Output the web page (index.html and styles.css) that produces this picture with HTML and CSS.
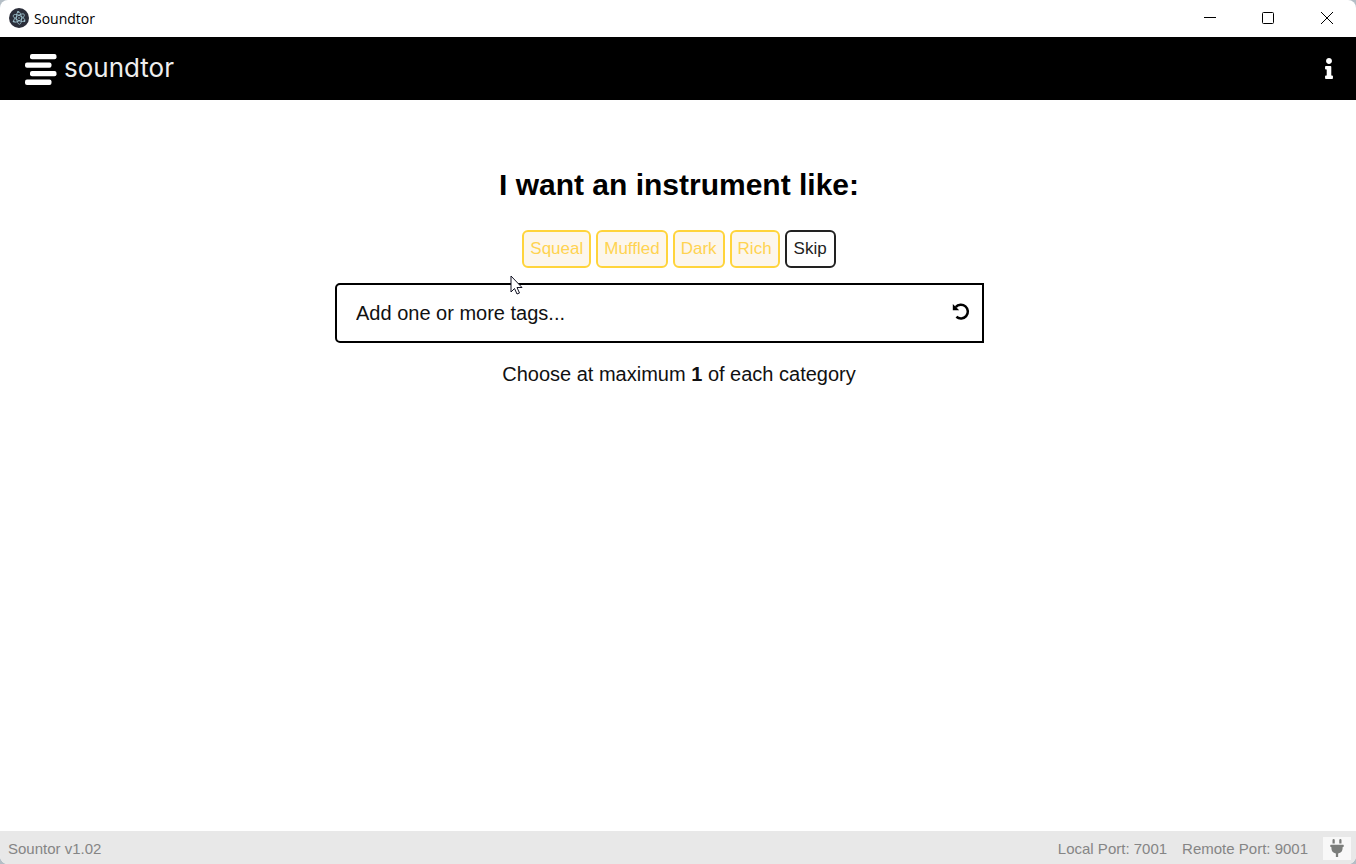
FILE: index.html
```html
<!DOCTYPE html>
<html lang="en">
<head>
<meta charset="utf-8">
<title>Soundtor</title>
<link rel="stylesheet" href="styles.css">
</head>
<body>
<div class="window">
  <div class="titlebar">
    <svg class="app-icon" viewBox="0 0 20 20" aria-hidden="true">
      <circle cx="10" cy="10" r="10" fill="#2b2e3a"/>
      <g fill="none" stroke="#9fc3cf" stroke-width="0.8">
        <ellipse cx="10" cy="10" rx="6.3" ry="2.5" transform="rotate(25 10 10)"/>
        <ellipse cx="10" cy="10" rx="6.3" ry="2.5" transform="rotate(85 10 10)"/>
        <ellipse cx="10" cy="10" rx="6.3" ry="2.5" transform="rotate(145 10 10)"/>
      </g>
      <g fill="#9fc3cf"><circle cx="10" cy="10" r="0.8"/><circle cx="4.6" cy="13.4" r="0.9"/><circle cx="15.4" cy="13" r="0.9"/><circle cx="9" cy="4" r="0.9"/></g>
    </svg>
    <span class="window-title">Soundtor</span>
    <div class="window-controls">
      <button class="window-button" aria-label="Minimize"><svg viewBox="0 0 14 14"><path d="M0 6.500h12"/></svg></button>
      <button class="window-button" aria-label="Maximize"><svg viewBox="0 0 14 14"><rect x="0.500" y="1.500" width="11" height="11" rx="1"/></svg></button>
      <button class="window-button" aria-label="Close"><svg viewBox="0 0 14 14"><path d="M1 1l12 12M13 1L1 13"/></svg></button>
    </div>
  </div>
  <header class="header">
    <div class="brand">
      <svg class="brand-mark" viewBox="0 0 32 34" aria-hidden="true">
        <g fill="#fff"><rect x="5" y="3" width="26.500" height="5.300" rx="2"/><rect x="0" y="11.500" width="26.500" height="5.300" rx="2"/><rect x="5" y="20" width="26.500" height="5.300" rx="2"/><rect x="0" y="28.600" width="26.500" height="5.300" rx="2"/></g>
      </svg>
      <span class="brand-name">soundtor</span>
    </div>
    <button class="info-button" aria-label="Information">
      <svg viewBox="0 0 192 512" width="8" height="21"><path fill="#fff" d="M20 424.229h20V279.771H20c-11.046 0-20-8.954-20-20V212c0-11.046 8.954-20 20-20h112c11.046 0 20 8.954 20 20v212.229h20c11.046 0 20 8.954 20 20V492c0 11.046-8.954 20-20 20H20c-11.046 0-20-8.954-20-20v-47.771c0-11.046 8.954-20 20-20zM96 0C56.235 0 24 32.235 24 72s32.235 72 72 72 72-32.235 72-72S135.764 0 96 0z"/></svg>
    </button>
  </header>
  <main class="main">
    <h1 class="heading">I want an instrument like:</h1>
    <div class="chips">
      <button class="chip">Squeal</button>
      <button class="chip">Muffled</button>
      <button class="chip">Dark</button>
      <button class="chip">Rich</button>
      <button class="chip chip-skip">Skip</button>
    </div>
    <div class="search">
      <div class="search-box">
        <input class="search-input" type="text" aria-label="Tags" placeholder="Add one or more tags...">
        <button class="reset-button" aria-label="Reset">
          <svg viewBox="0 0 18 20" width="18" height="20"><path d="M3.700 4.100A6.900 6.900 0 1 1 4.400 13.800" fill="none" stroke="#000" stroke-width="2.500"/><path d="M0.800 1V7.300H7.200Z"/></svg>
        </button>
      </div>
    </div>
    <p class="hint">Choose at maximum <strong>1</strong> of each category</p>
    <svg class="cursor" viewBox="0 0 13 20" aria-hidden="true"><path d="M1 1V17L4.500 13.500L7 19L9.500 18L7 12.500H12Z" fill="#fff" stroke="#112" stroke-width="1"/></svg>
  </main>
  <footer class="statusbar">
    <span>Sountor v1.02</span>
    <div class="ports">
      <span>Local Port: 7001</span>
      <span>Remote Port: 9001</span>
      <button class="plug-button" aria-label="Connection">
        <svg viewBox="0 0 384 512" width="14" height="18"><path fill="#7b7d7b" d="M320 32a32 32 0 0 0-64 0v96h64zm48 128H16A16 16 0 0 0 0 176v32a16 16 0 0 0 16 16h16v32a160.070 160.070 0 0 0 128 156.800V512h64v-99.200A160.070 160.070 0 0 0 352 256v-32h16a16 16 0 0 0 16-16v-32a16 16 0 0 0-16-16zM128 32a32 32 0 0 0-64 0v96h64z"/></svg>
      </button>
    </div>
  </footer>
</div>
</body>
</html>
```
FILE: styles.css
```css
* { box-sizing: border-box; }
html { background: #b4bec6; }
body { margin: 0; font-family: "Liberation Sans", Arial, sans-serif; color: #000; }
button { font: inherit; border: 0; padding: 0; background: none; }
svg { display: block; }

.window {
  display: flex;
  flex-direction: column;
  min-height: 100vh;
  background: #fff;
  border-radius: 8px;
  overflow: hidden;
}

.titlebar { display: flex; align-items: center; height: 37px; padding: 0 0 1px 9px; gap: 5px; }
.app-icon { width: 20px; height: 20px; }
.window-title { font-family: "Open Sans", "Noto Sans", sans-serif; font-size: 14px; }
.window-controls { display: flex; margin-left: auto; }
.window-button { display: grid; place-items: center; width: 58px; height: 36px; }
.window-button svg { width: 14px; height: 14px; fill: none; stroke: #000; stroke-width: 1; }

.header {
  display: flex;
  align-items: center;
  justify-content: space-between;
  height: 63px;
  padding: 0 23px 1px 25px;
  background: #000;
}
.brand { display: flex; align-items: center; gap: 7px; color: #eee; }
.brand-mark { width: 32px; height: 34px; }
.brand-name { font-family: Inter, sans-serif; font-size: 26px; line-height: 32px; }

.main {
  position: relative;
  flex: 1;
  display: flex;
  flex-direction: column;
  align-items: center;
  padding: 66px 0 0 2px;
}
.heading { margin: 0; font-size: 30px; line-height: 38px; }
.chips { display: flex; gap: 5px; margin-top: 26px; }
.chip {
  height: 38px;
  padding: 0 6px;
  border: 2px solid #ffd43b;
  border-radius: 6px;
  background: #fcf6ec;
  color: #ffd351;
  font-size: 17px;
}
.chip-skip { padding: 0 7px; border-color: #222; background: #fff; color: #222; }

.search { width: 100%; max-width: 688px; margin-top: 15px; padding-right: 39px; }
.search-box {
  display: flex;
  align-items: center;
  height: 60px;
  padding: 0 12px 0 19px;
  border: 2px solid #000;
  border-radius: 5px 0 0 5px;
}
.search-input { flex: 1; min-width: 0; height: 100%; border: 0; padding: 0; outline: 0; background: none; font: inherit; font-size: 20px; }
.search-input::placeholder { color: #111; opacity: 1; }
.hint { margin: 19px 0 0; font-size: 20px; line-height: 24px; color: #111; }
.cursor { position: absolute; left: 510px; top: 175px; width: 13px; height: 20px; }

.statusbar {
  display: flex;
  align-items: center;
  justify-content: space-between;
  height: 33px;
  padding: 2px 5px 0 8px;
  background: #e8e8e8;
  color: #858585;
  font-size: 15px;
}
.ports { display: flex; align-items: center; gap: 15px; }
.plug-button { display: grid; align-items: start; justify-items: center; width: 28px; height: 23px; padding-top: 2px; background: #f8f8f8; }
```
